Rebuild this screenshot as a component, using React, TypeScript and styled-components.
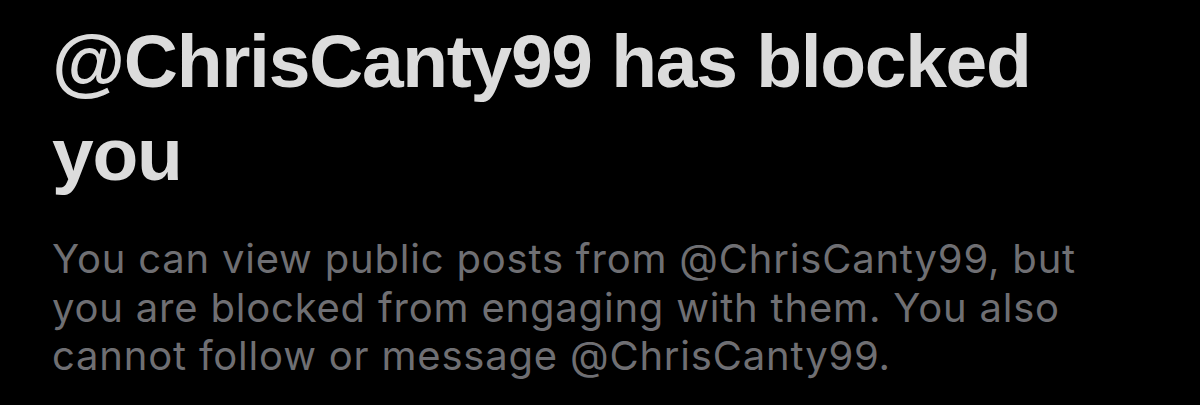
import { createGlobalStyle, styled } from "styled-components";

const GlobalStyle = createGlobalStyle`
  html, body {
    margin: 0;
    padding: 0;
    background: #000;
  }
`;

const App = () => {
  return (
    <>
      <GlobalStyle />
      <Container>
        <Heading>
          @ChrisCanty99 has blocked
          <br />
          you
        </Heading>
        <Body>
          You can view public posts from @ChrisCanty99, but
          <br />
          you are blocked from engaging with them. You also
          <br />
          cannot follow or message @ChrisCanty99.
        </Body>
      </Container>
    </>
  );
};

export default App;

const Container = styled.div`
  width: 1200px;
  height: 405px;
  box-sizing: border-box;
  padding: 15px 0 0 52px;
  background: #000;
  display: flex;
  flex-direction: column;
  overflow: hidden;
`;

const Heading = styled.h1`
  margin: 0;
  font-family: "Liberation Sans", Arial, sans-serif;
  font-weight: 700;
  font-size: 75px;
  letter-spacing: -1.3px;
  line-height: 93px;
  color: #dcdcdc;
  white-space: nowrap;
`;

const Body = styled.p`
  margin: 34px 0 0;
  font-family: Inter, "Liberation Sans", sans-serif;
  font-weight: 400;
  font-size: 40px;
  letter-spacing: 0.8px;
  line-height: 48.5px;
  color: #6f6f73;
  white-space: nowrap;
`;
